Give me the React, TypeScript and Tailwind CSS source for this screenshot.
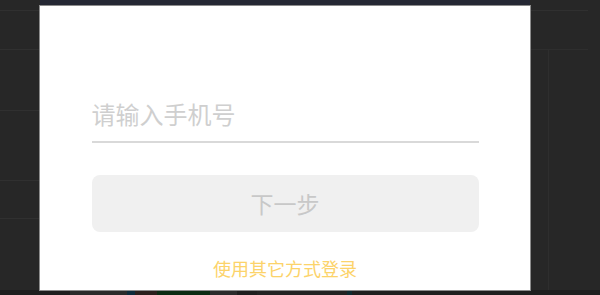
const App = () => {
  return (
    <div
      className="relative h-[295px] w-[600px] overflow-hidden bg-[#272727]"
      style={{ fontFamily: '"Noto Sans CJK SC", "Noto Sans", sans-serif' }}
    >
      {/* page behind the overlay */}
      <div className="flex h-full w-full">
        <div className="flex w-[40px] flex-col">
          <div className="h-[11px] border-b border-[#303030]" />
          <div className="h-[39px] border-b border-[#303030]" />
          <div className="h-[61px] border-b border-[#303030]" />
          <div className="h-[70px] border-b border-[#303030]" />
          <div className="h-[38px] border-b border-[#303030]" />
          <div className="flex-1" />
        </div>
        <div className="flex flex-1 flex-col">
          <div className="h-[5px] bg-[#252834]" />
          <div className="flex-1" />
        </div>
        <div className="flex w-[70px] flex-col">
          <div className="mr-[12px] h-[11px] border-b border-[#303030]" />
          <div className="mr-[12px] h-[39px] border-b border-[#2e2e2e]" />
          <div className="flex flex-1">
            <div className="w-[19px] border-r border-[#2e2e2e]" />
            <div className="flex-1" />
          </div>
        </div>
      </div>
      <div className="absolute bottom-0 left-0 flex h-[5px] w-full">
        <div className="w-[70px] bg-[#1e1e1e]" />
        <div className="w-[57px] bg-[#2a2a2a]" />
        <div className="w-[8px] bg-[#0d2a3a]" />
        <div className="w-[22px] bg-[#2a1f1c]" />
        <div className="w-[53px] bg-[#0b2a12]" />
        <div className="w-[27px] bg-[#2b2b2b]" />
        <div className="w-[20px] bg-[#1e1e1e]" />
        <div className="w-[90px] bg-[#222222]" />
        <div className="w-[5px] bg-[#0e2a30]" />
        <div className="flex-1 bg-[#1f1f1f]" />
      </div>

      {/* modal */}
      <div className="absolute left-[39px] top-[5px] flex h-[286px] w-[492px] flex-col items-center border border-[#8c8c8c] bg-white">
        <div className="mt-[93px] w-[387px]">
          <div className="flex h-[44px] items-start border-b-[2px] border-[#d9d9d9] pt-[3px]">
            <span className="text-[24px] leading-none text-[#cfcfcf]">请输入手机号</span>
          </div>
          <div className="mt-[32px] flex h-[57px] items-center justify-center rounded-[8px] bg-[#f0f0f0]">
            <span className="text-[23px] leading-none text-[#c8c8c8]">下一步</span>
          </div>
          <div className="mt-[27px] text-center text-[18px] leading-none text-[#fcd36a]">
            使用其它方式登录
          </div>
        </div>
      </div>
    </div>
  );
};

export default App;
